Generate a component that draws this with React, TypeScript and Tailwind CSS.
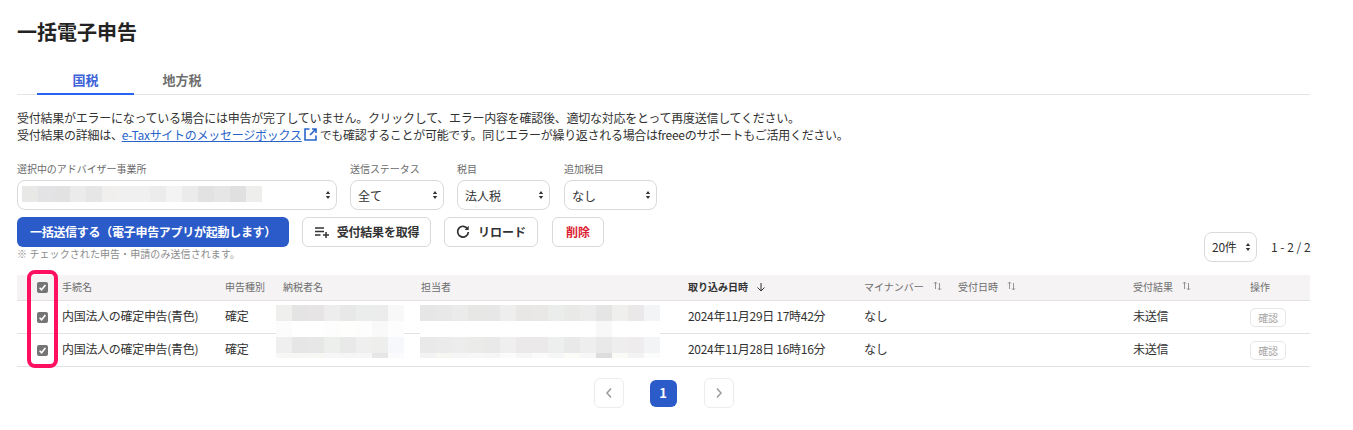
import React from "react";

const font = { fontFamily: '"Noto Sans CJK JP", "Noto Sans", sans-serif' };

function Arrows() {
  return (
    <svg width="6" height="10" viewBox="0 0 6 10" className="absolute right-[5px] top-1/2 -translate-y-1/2 pointer-events-none">
      <path d="M3 1 L5.2 4 H0.8 Z M3 9 L0.8 6 H5.2 Z" fill="#333" />
    </svg>
  );
}

function Sel({ w, label, value }: { w: string; label?: string; value: string }) {
  return (
    <div className={`flex flex-col ${w}`}>
      {label && <span className="text-[10px] leading-[14px] text-[#6b6b6b] mb-[4px] tracking-[-0.05px]">{label}</span>}
      <div className="relative h-[30px] rounded-[8px] border border-[#d9d9d9] bg-white flex items-center pl-[7px] pt-[2px] text-[12px] text-[#323232]">
        {value}
        <Arrows />
      </div>
    </div>
  );
}

function Pix({ rows, heights }: { rows: string[][]; heights: number[] }) {
  return (
    <div className="flex flex-col">
      {rows.map((r, i) => (
        <div key={i} className="flex">
          {r.map((c, j) => (
            <div key={j} style={{ width: 16, height: heights[i], background: c }} />
          ))}
        </div>
      ))}
    </div>
  );
}

function Check() {
  return (
    <div className="w-[11px] h-[11px] rounded-[2px] bg-[#757575] flex items-center justify-center">
      <svg width="9" height="9" viewBox="0 0 9 9"><path d="M1.6 4.8 L3.6 6.8 L7.4 2" fill="none" stroke="#fff" strokeWidth="1.6" /></svg>
    </div>
  );
}

function Sort() {
  return (
    <svg width="9" height="10" viewBox="0 0 9 10" className="ml-[9px] -mt-[2px]">
      <path d="M2.5 8 V1 M1 2.6 L2.5 1 L4 2.6 M6.5 2 V9 M5 7.4 L6.5 9 L8 7.4" fill="none" stroke="#8a8a8a" strokeWidth="0.9" />
    </svg>
  );
}

const cols = "grid grid-cols-[45px_163px_58px_138px_267px_176px_94px_175px_117px_60px] items-center";

function Row({ date }: { date: string }) {
  return (
    <div className={`${cols} h-[33px] border-b border-[#e3e3e3] text-[12px] text-[#323232] tracking-[-0.3px]`}>
      <div className="pl-[20px]"><Check /></div>
      <div className="pb-[2px]">内国法人の確定申告(青色)</div>
      <div className="pb-[2px]">確定</div>
      <div />
      <div />
      <div className="pb-[2px]">{date}</div>
      <div className="pb-[2px]">なし</div>
      <div />
      <div className="pb-[2px]">未送信</div>
      <div>
        <span className="inline-flex items-center justify-center w-[36px] h-[19px] rounded-[5px] border border-[#e6e6e6] text-[10px] text-[#a5a5a5]">確認</span>
      </div>
    </div>
  );
}

const heights = [16, 16, 16, 5];

export default function App() {
  return (
    <div style={font} className="relative w-[1353px] h-[430px] bg-white overflow-hidden pl-[17px] pr-[43px] text-[#323232]">
      <h1 className="pt-[17px] text-[20px] leading-[29px] font-bold text-[#232323]">一括電子申告</h1>

      <div className="mt-[20px] flex h-[29px] border-b border-[#e5e5e5] pl-[20px] text-[13px] font-bold">
        <div className="w-[97px] h-[29px] border-b-2 border-[#2864f0] text-center text-[#3b62d8] leading-[28px]">国税</div>
        <div className="w-[96px] text-center text-[#6e6e6e] leading-[28px]">地方税</div>
      </div>

      <div className="mt-[14px] text-[12px] leading-[17px] text-[#323232] tracking-[-0.26px]">
        <p>受付結果がエラーになっている場合には申告が完了していません。クリックして、エラー内容を確認後、適切な対応をとって再度送信してください。</p>
        <p className="flex items-center">
          受付結果の詳細は、
          <a className="text-[#2864c8] underline -ml-[1px]">e-Taxサイトのメッセージボックス</a>
          <svg width="15" height="15" viewBox="0 0 15 15" className="ml-[1px] mr-[2px]">
            <path d="M6.5 2 H2 V13 H13 V8.5 M9 2 H13 V6 M13 2 L7 8" fill="none" stroke="#2864c8" strokeWidth="1.6" />
          </svg>
          <span className="tracking-[-0.3px]">でも確認することが可能です。同じエラーが繰り返される場合はfreeeのサポートもご活用ください。</span>
        </p>
      </div>

      <div className="mt-[19px] flex">
        <div className="relative">
          <Sel w="w-[320px] mr-[13px]" label="選択中のアドバイザー事業所" value="" />
          <div className="absolute left-[5px] top-[24px]">
            <Pix heights={[16]} rows={[["#e8e8e6", "#e3e3e5", "#e2e2e2", "#ebebeb", "#e6e6e6", "#f0efed", "#f0f0f0", "#f0f0f0", "#ececec", "#f3f3f3", "#ebebeb", "#e2e2e2", "#e6e6e6", "#e0e0e0", "#eeeeec"]]} />
          </div>
        </div>
        <Sel w="w-[94px] mr-[13px]" label="送信ステータス" value="全て" />
        <Sel w="w-[93px] mr-[14px]" label="税目" value="法人税" />
        <Sel w="w-[93px]" label="追加税目" value="なし" />
      </div>

      <div className="mt-[7px] flex h-[30px] text-[12px] font-bold">
        <button className="w-[272px] rounded-[6px] bg-[#2b5bc9] text-white tracking-[-0.28px]">一括送信する（電子申告アプリが起動します）</button>
        <button className="ml-[13px] w-[129px] rounded-[6px] border border-[#d9d9d9] flex items-center justify-center gap-[7px] text-[#323232] tracking-[-0.2px]">
          <svg width="16" height="12" viewBox="0 0 16 12"><path d="M1 2 H10 M1 5.5 H10 M1 9 H6.5 M9 9 H15 M12 6 V12" fill="none" stroke="#323232" strokeWidth="1.5" /></svg>
          受付結果を取得
        </button>
        <button className="ml-[13px] w-[94px] rounded-[6px] border border-[#d9d9d9] flex items-center justify-center gap-[8px] text-[#323232]">
          <svg width="14" height="14" viewBox="0 0 13 13"><path d="M10.8 3.6 A5 5 0 1 0 11.5 6.5" fill="none" stroke="#323232" strokeWidth="1.6" /><path d="M11.8 0.8 V4.6 H8 Z" fill="#323232" /></svg>
          リロード
        </button>
        <button className="ml-[14px] w-[52px] rounded-[6px] border border-[#d9d9d9] text-[#dc1e32]">削除</button>
      </div>

      <div className="flex items-start justify-between">
        <div className="text-[10px] leading-[14px] text-[#8c8c8c] tracking-[0.08px]">※ チェックされた申告・申請のみ送信されます。</div>
        <div className="flex items-center -mt-[15px]">
          <div className="relative w-[53px] h-[30px] rounded-[8px] border border-[#d9d9d9] flex items-center pl-[7px] text-[12px] tracking-[-0.25px]">
            20件
            <Arrows />
          </div>
          <span className="ml-[14px] text-[12px] w-[39px] whitespace-nowrap">1 - 2 / 2</span>
        </div>
      </div>

      <div className="mt-[13px]">
        <div className={`${cols} h-[26px] bg-[#f5f3f4] border-b border-[#e3e3e3] text-[10px] text-[#6e6e6e]`}>
          <div className="pl-[20px]"><Check /></div>
          <div className="pb-[2px]">手続名</div>
          <div className="pb-[2px]">申告種別</div>
          <div className="pb-[2px]">納税者名</div>
          <div className="pb-[2px]">担当者</div>
          <div className="pb-[2px] flex items-center font-bold text-[#323232]">
            取り込み日時
            <svg width="10" height="10" viewBox="0 0 10 10" className="ml-[8px]"><path d="M5 1 V9 M1.5 5.5 L5 9 L8.5 5.5" fill="none" stroke="#323232" strokeWidth="1" /></svg>
          </div>
          <div className="pb-[2px] flex items-center">マイナンバー<Sort /></div>
          <div className="pb-[2px] flex items-center">受付日時<Sort /></div>
          <div className="pb-[2px] flex items-center">受付結果<Sort /></div>
          <div className="pb-[2px]">操作</div>
        </div>
        <Row date="2024年11月29日 17時42分" />
        <Row date="2024年11月28日 16時16分" />
      </div>

      <div className="mt-[11px] flex justify-center">
        <div className="flex items-center">
          <div className="w-[30px] h-[30px] rounded-[6px] border border-[#ececec] flex items-center justify-center">
            <svg width="8" height="12" viewBox="0 0 8 12"><path d="M6 1.5 L2 6 L6 10.5" fill="none" stroke="#9a9a9a" strokeWidth="1.5" /></svg>
          </div>
          <div className="ml-[26px] w-[27px] h-[27px] rounded-[6px] bg-[#2b5bc9] text-white text-[13px] font-bold flex items-center justify-center">1</div>
          <div className="ml-[27px] w-[30px] h-[30px] rounded-[6px] border border-[#ececec] flex items-center justify-center">
            <svg width="8" height="12" viewBox="0 0 8 12"><path d="M2 1.5 L6 6 L2 10.5" fill="none" stroke="#9a9a9a" strokeWidth="1.5" /></svg>
          </div>
        </div>
      </div>

      <div className="absolute left-[276px] top-[305px]">
        <Pix heights={heights} rows={[
          ["#efefed", "#e4e4e4", "#e6e4e4", "#ededed", "#e8e8e8", "#ebedec", "#ececec", "#f8f8f8"],
          ["#fcfcfc", "#ffffff", "#ffffff", "#fdfdfd", "#fefefc", "#fdfdfd", "#f9f9f9", "#fdfdfd"],
          ["#efefef", "#e6e6e6", "#e7e7e7", "#edefec", "#e9e9e9", "#efefef", "#eeeeec", "#f6f8fb"],
          ["#f7f7f5", "#f7f7f5", "#f7f7f4", "#f7f7f7", "#f5f5f5", "#f6f6f6", "#e6e6e6", "#fbfbfd"],
        ]} />
      </div>
      <div className="absolute left-[420px] top-[305px]">
        <Pix heights={heights} rows={[
          ["#e6e6e6", "#e8e8e8", "#ebebeb", "#e7e7e5", "#e7e7e7", "#eeeeee", "#e8e7e5", "#e9e8e6", "#ebedec", "#e9e9e7", "#ececec", "#e5e5e5", "#efefed", "#eae8e8", "#f3f4f6"],
          ["#ffffff", "#ffffff", "#ffffff", "#ffffff", "#ffffff", "#ffffff", "#ffffff", "#ffffff", "#ffffff", "#ffffff", "#ffffff", "#f8f8f8", "#ffffff", "#ffffff", "#ffffff"],
          ["#e9e9e9", "#ebebeb", "#ededed", "#ebebe9", "#e9e9e9", "#efefef", "#ebe9e9", "#ebe9ea", "#edefee", "#e9e9e9", "#eeeeee", "#e9e9e9", "#eeeeee", "#eeecec", "#f3f4f6"],
          ["#f3f3f3", "#f7f7f2", "#f6f6f6", "#f7f7f7", "#f5f5f5", "#fbfbfb", "#f6f6f6", "#fafbfa", "#f5f6f6", "#fbfbf7", "#f7f7f7", "#dddddd", "#fafaf6", "#f3f3f3", "#fbfcfc"],
        ]} />
      </div>
      <div className="absolute left-[27px] top-[270px] w-[31px] h-[98px] rounded-[8px] border-[4px] border-[#ff0f5f]" />
    </div>
  );
}
